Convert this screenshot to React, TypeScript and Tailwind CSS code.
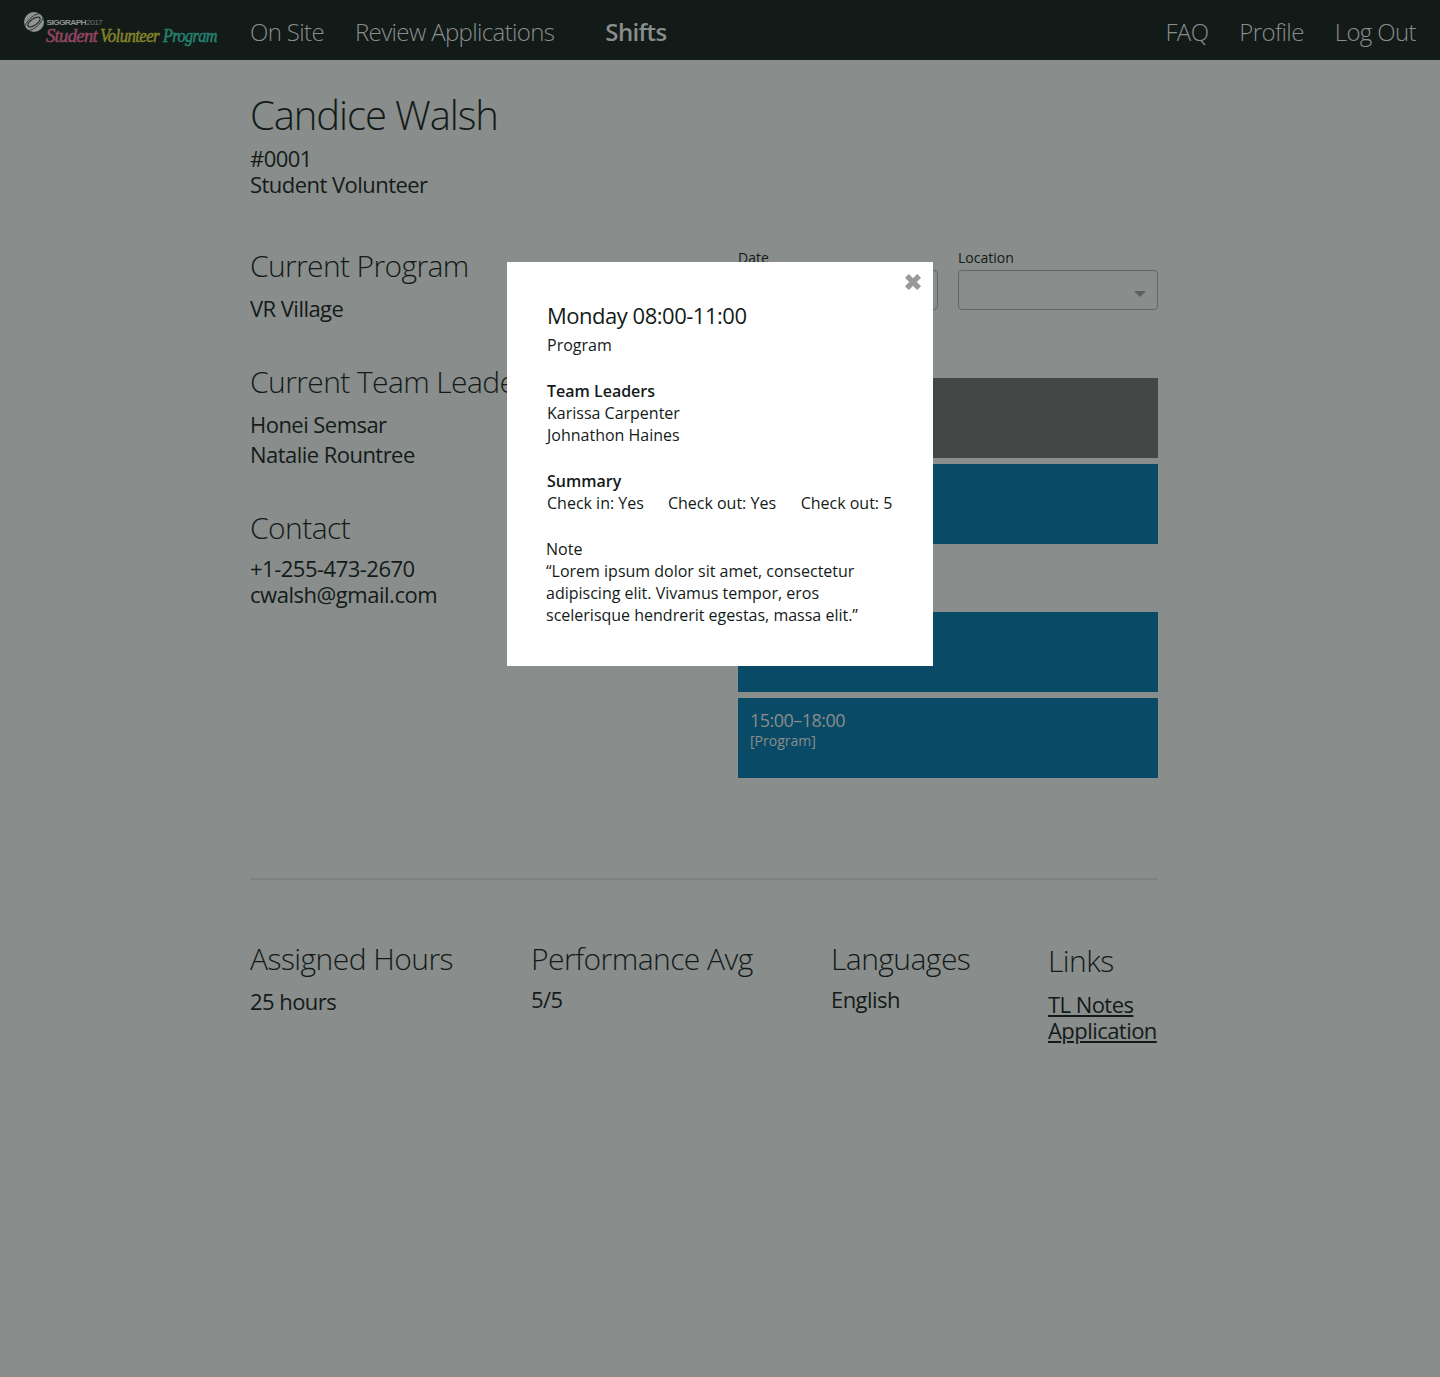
import React from "react";

const h2 = "text-[30px] leading-[40px] font-light whitespace-nowrap";
const body = "text-[22px] whitespace-nowrap";

function Logo() {
  return (
    <svg width="210" height="48" viewBox="0 0 210 48" className="mt-1 block overflow-visible">
      <circle cx="14" cy="14" r="10" fill="#8f9392" />
      <g transform="rotate(-35 14 14)" fill="none" stroke="#131b19">
        <ellipse cx="14" cy="14" rx="7.2" ry="3.2" strokeWidth="1" />
        <path d="M3 16.5 C7 20.5 17 20.5 24.5 15.5" strokeWidth="0.7" />
        <path d="M25 11.5 C21 7.5 11 7.5 3.5 12.5" strokeWidth="0.7" />
      </g>
      <text x="26.5" y="17" fontFamily="Liberation Sans" fontSize="7.4" fontWeight="700" fill="#8f9392" textLength="39.5" lengthAdjust="spacingAndGlyphs">SIGGRAPH</text>
      <text x="66.5" y="17" fontFamily="Liberation Sans" fontSize="7.4" fill="#6c7170" textLength="15.5" lengthAdjust="spacingAndGlyphs">2017</text>
      <g fontFamily="Liberation Serif" fontStyle="italic" fontSize="18.5" strokeWidth="0.5">
        <text x="26" y="33.5" fill="#944663" stroke="#944663" textLength="51" lengthAdjust="spacingAndGlyphs">Student</text>
        <text x="80" y="33.5" fill="#84852a" stroke="#84852a" textLength="59" lengthAdjust="spacingAndGlyphs">Volunteer</text>
        <text x="143" y="33.5" fill="#25836f" stroke="#25836f" textLength="54" lengthAdjust="spacingAndGlyphs">Program</text>
      </g>
    </svg>
  );
}

function Header() {
  return (
    <header className="flex h-[60px] items-center bg-[#131b19] text-2xl font-light tracking-[-0.64px] whitespace-nowrap text-[#898d8b]">
      <div className="ml-5 w-[230px]">
        <Logo />
      </div>
      <nav className="flex flex-1 items-center pt-[3px] pr-6">
        <a>On Site</a>
        <a className="ml-[31px]">Review Applications</a>
        <a className="ml-[51px] font-semibold tracking-[-0.64px]">Shifts</a>
        <div className="ml-auto flex gap-[31px] tracking-[-0.62px]">
          <a>FAQ</a>
          <a>Profile</a>
          <a>Log Out</a>
        </div>
      </nav>
    </header>
  );
}

function SelectField({ label }: { label: string }) {
  return (
    <div className="w-[200px]">
      <div className="text-sm leading-5">{label}</div>
      <div className="mt-0.5 flex h-10 items-center justify-end rounded-[4px] border border-[#626665] pt-2 pr-[11px]">
        <svg width="12" height="6" viewBox="0 0 12 6">
          <path d="M0 0H12L6 6Z" fill="#5c605f" />
        </svg>
      </div>
    </div>
  );
}

function Shift({ tone, time, program }: { tone: string; time?: string; program?: string }) {
  return (
    <div className={`h-20 px-3 pt-[11px] text-[#898d8b] ${tone}`}>
      <div className="text-lg leading-[22px] tracking-[-0.52px]">{time}</div>
      <div className="text-sm leading-5">{program}</div>
    </div>
  );
}

function Modal() {
  return (
    <section className="absolute top-[262px] left-[507px] h-[404px] w-[426px] bg-white px-10 pt-[38px] text-base leading-[22px] whitespace-nowrap">
      <svg className="absolute top-3 right-3" width="16" height="16" viewBox="0 0 16 16">
        <path d="M3.8 0.3 8 4.5 12.2 0.3 15.7 3.8 11.5 8 15.7 12.2 12.2 15.7 8 11.5 3.8 15.7 0.3 12.2 4.5 8 0.3 3.8Z" fill="#999" stroke="#999" strokeWidth=".6" strokeLinejoin="round" />
      </svg>
      <h3 className="text-[22px] leading-[30px] tracking-[-0.48px]">Monday 08:00-11:00</h3>
      <p className="mt-1">Program</p>
      <h4 className="mt-6 font-semibold">Team Leaders</h4>
      <p>Karissa Carpenter</p>
      <p>Johnathon Haines</p>
      <h4 className="mt-6 font-semibold">Summary</h4>
      <div className="flex">
        <span>Check in: Yes</span>
        <span className="ml-6">Check out: Yes</span>
        <span className="ml-[24.6px]">Check out: 5</span>
      </div>
      <div className="mt-6 -ml-px">
        <p>Note</p>
        <p>
          “Lorem ipsum dolor sit amet, consectetur
          <br />
          adipiscing elit. Vivamus tempor, eros
          <br />
          scelerisque hendrerit egestas, massa elit.”
        </p>
      </div>
    </section>
  );
}

export default function App() {
  return (
    <div className="relative h-[1377px] w-[1440px] overflow-hidden bg-[#898d8b] font-['Open_Sans',sans-serif] text-[#131b19]">
      <Header />
      <main className="ml-[250px] w-[908px] pt-[31px]">
        <h1 className="text-[40px] leading-[48px] font-light tracking-[-1.1px]">Candice Walsh</h1>
        <div className={`mt-1.5 leading-[26px] tracking-[-0.54px] ${body}`}>
          <p>#0001</p>
          <p>Student Volunteer</p>
        </div>

        <div className="mt-[49px] flex h-[634px] justify-between border-b-2 border-[#7f8381]">
          <div className="w-[300px]">
            <h2 className={`tracking-[-0.64px] ${h2}`}>Current Program</h2>
            <p className={`mt-[7px] leading-[30px] tracking-[-0.54px] ${body}`}>VR Village</p>
            <h2 className={`mt-[39px] tracking-[-0.6px] ${h2}`}>Current Team Leaders</h2>
            <div className={`mt-[7px] leading-[30px] tracking-[-0.54px] ${body}`}>
              <p>Honei Semsar</p>
              <p>Natalie Rountree</p>
            </div>
            <h2 className={`mt-[39px] tracking-[-0.55px] ${h2}`}>Contact</h2>
            <div className={`mt-[7px] leading-[26px] ${body}`}>
              <p className="tracking-[-0.5px]">+1-255-473-2670</p>
              <p className="tracking-[-0.47px]">cwalsh@gmail.com</p>
            </div>
          </div>
          <div className="w-[420px]">
            <div className="flex gap-5 pt-0.5">
              <SelectField label="Date" />
              <SelectField label="Location" />
            </div>
            <div className="mt-[68px] flex flex-col gap-1.5">
              <Shift tone="bg-[#434746]" />
              <Shift tone="bg-[#094b66]" />
            </div>
            <div className="mt-[68px] flex flex-col gap-1.5">
              <Shift tone="bg-[#094b66]" />
              <Shift tone="bg-[#094b66]" time="15:00–18:00" program="[Program]" />
            </div>
          </div>
        </div>

        <div className="flex pt-[59px] tracking-[-0.55px]">
          <div className="w-[281px]">
            <h2 className={h2}>Assigned Hours</h2>
            <p className={`mt-[7px] leading-[30px] ${body}`}>25 hours</p>
          </div>
          <div className="w-[300px]">
            <h2 className={h2}>Performance Avg</h2>
            <p className={`mt-[5px] leading-[30px] ${body}`}>5/5</p>
          </div>
          <div className="w-[217px]">
            <h2 className={h2}>Languages</h2>
            <p className={`mt-[5px] leading-[30px] ${body}`}>English</p>
          </div>
          <div className="w-[110px] pt-0.5">
            <h2 className={h2}>Links</h2>
            <div className={`mt-2.5 leading-[26px] underline decoration-2 underline-offset-2 ${body}`}>
              <p>TL Notes</p>
              <p>Application</p>
            </div>
          </div>
        </div>
      </main>
      <Modal />
    </div>
  );
}
